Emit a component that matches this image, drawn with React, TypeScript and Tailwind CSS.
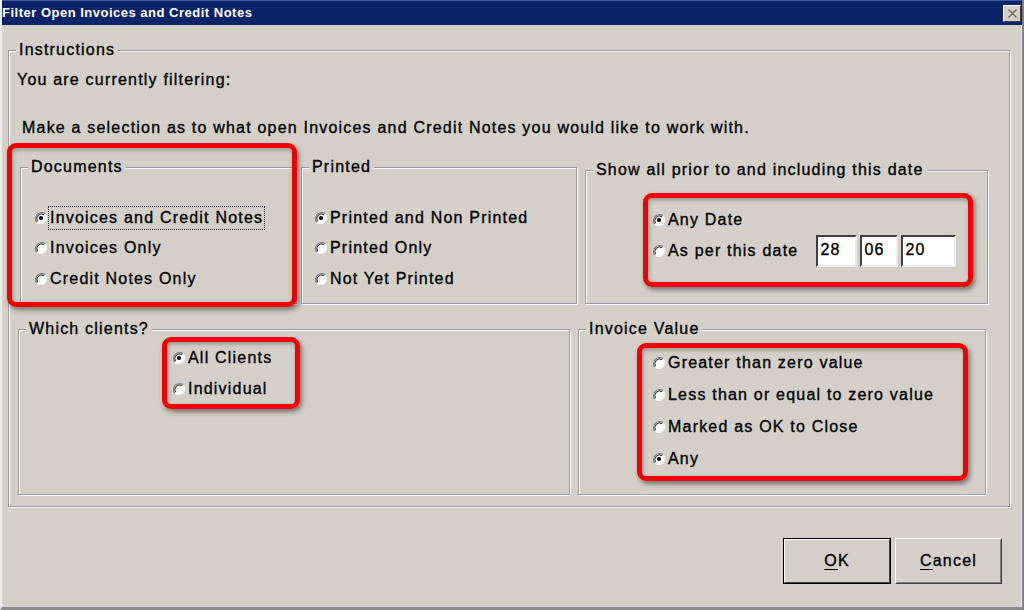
import React from "react";

const font = "font-['Liberation_Sans',Arial,sans-serif]";

const Radio = ({ checked }: { checked?: boolean }) => (
  <svg width="14" height="14" viewBox="0 0 14 14" className="shrink-0">
    <circle cx="7" cy="7" r="6" fill="#fff" />
    <path d="M11.2 2.8 A6 6 0 0 0 2.8 11.2" stroke="#808080" strokeWidth="1.4" fill="none" />
    <path d="M10.2 3.8 A4.6 4.6 0 0 0 3.8 10.2" stroke="#404040" strokeWidth="1.1" fill="none" />
    <path d="M2.8 11.2 A6 6 0 0 0 11.2 2.8" stroke="#f2f2f2" strokeWidth="1.4" fill="none" />
    {checked && <circle cx="7" cy="7" r="2.1" fill="#000" />}
  </svg>
);

const Option = ({
  label,
  checked,
  focused,
  h = "h-[31px]",
}: {
  label: string;
  checked?: boolean;
  focused?: boolean;
  h?: string;
}) => (
  <div className={`flex items-center ${h}`}>
    <Radio checked={checked} />
    <span
      className={`border px-[1px] py-[1px] leading-[20px] ${
        focused ? "border-dotted border-[#333]" : "border-transparent"
      }`}
    >
      {label}
    </span>
  </div>
);

const Group = ({
  title,
  className,
  children,
}: {
  title: string;
  className?: string;
  children?: React.ReactNode;
}) => (
  <div
    className={`relative shrink-0 border border-[#9a9a9a] shadow-[inset_1px_1px_0_#fff,1px_1px_0_#fff] ${className ?? ""}`}
  >
    <span className="absolute -top-[11px] left-[7px] bg-[#d4d0c8] px-[3px] leading-[20px] whitespace-nowrap">
      {title}
    </span>
    {children}
  </div>
);

const DateBox = ({ value, w }: { value: string; w: string }) => (
  <div
    className={`${w} h-[32px] bg-white border-2 border-t-[#404040] border-l-[#404040] border-r-[#ececec] border-b-[#ececec] pl-[2px] leading-[26px]`}
  >
    {value}
  </div>
);

const Mark = ({ className }: { className: string }) => (
  <div
    className={`absolute border-[5px] border-[#f20000] rounded-[9px] shadow-[2px_3px_5px_rgba(0,0,0,0.45),inset_1px_2px_4px_rgba(0,0,0,0.3)] ${className}`}
  />
);

export default function App() {
  return (
    <div
      className={`relative w-[1024px] h-[610px] overflow-hidden bg-[#d4d0c8] text-black text-[16px] tracking-[1.2px] [-webkit-text-stroke:0.35px_#000] ${font} flex flex-col border-l-2 border-l-[#ececec] border-r-2 border-r-[#808080] border-b-[3px] border-b-[#8a8a8a]`}
    >
      {/* title bar */}
      <div className="h-[25px] shrink-0 bg-[#0a246a] border-t border-[#3a5a9a] flex items-center justify-between pl-[0px] pr-[1px]">
        <span className="text-white font-bold text-[13px] tracking-[0.5px] [-webkit-text-stroke:0px]">
          Filter Open Invoices and Credit Notes
        </span>
        <div className="w-[18px] h-[17px] mt-[1px] bg-[#d4d0c8] border border-t-white border-l-white border-r-[#404040] border-b-[#404040] flex items-center justify-center">
          <svg width="11" height="11" viewBox="0 0 11 11">
            <path d="M1.5 1.5 L9.5 9.5 M9.5 1.5 L1.5 9.5" stroke="#6e6e6e" strokeWidth="1.6" />
          </svg>
        </div>
      </div>

      <div className="flex-1 flex flex-col pl-[6px] pt-[25px] border-r border-r-[#ececec]">
        {/* Instructions */}
        <Group title="Instructions" className="w-[1002px] h-[457px]">
          <div className="pl-[8px] pt-[19px] flex flex-col">
            <div className="leading-[20px]">You are currently filtering:</div>
            <div className="leading-[20px] mt-[28px] ml-[5px]">
              Make a selection as to what open Invoices and Credit Notes you would like to work with.
            </div>

            <div className="flex items-start mt-[29px] ml-[3px]">
              <Group title="Documents" className="w-[277px] h-[137px]">
                <div className="pt-[34px] pl-[13px]">
                  <Option label="Invoices and Credit Notes" checked focused />
                  <Option label="Invoices Only" h="h-[30px]" />
                  <Option label="Credit Notes Only" />
                </div>
              </Group>
              <Group title="Printed" className="w-[276px] h-[137px] ml-[4px]">
                <div className="pt-[34px] pl-[12px]">
                  <Option label="Printed and Non Printed" checked />
                  <Option label="Printed Only" h="h-[30px]" />
                  <Option label="Not Yet Printed" />
                </div>
              </Group>
              <Group
                title="Show all prior to and including this date"
                className="w-[403px] h-[134px] ml-[8px] mt-[3px]"
              >
                <div className="pt-[33px] pl-[66px]">
                  <Option label="Any Date" checked />
                  <div className="flex items-center">
                    <Option label="As per this date" h="h-[32px]" />
                    <div className="flex gap-[3px] ml-[16px]">
                      <DateBox value="28" w="w-[41px]" />
                      <DateBox value="06" w="w-[38px]" />
                      <DateBox value="20" w="w-[55px]" />
                    </div>
                  </div>
                </div>
              </Group>
            </div>

            <div className="flex items-start mt-[25px] ml-[1px]">
              <Group title="Which clients?" className="w-[552px] h-[166px]">
                <div className="pt-[12px] pl-[153px]">
                  <Option label="All Clients" checked />
                  <Option label="Individual" />
                </div>
              </Group>
              <Group title="Invoice Value" className="w-[408px] h-[166px] ml-[8px]">
                <div className="pt-[17px] pl-[73px]">
                  <Option label="Greater than zero value" h="h-[32px]" />
                  <Option label="Less than or equal to zero value" h="h-[32px]" />
                  <Option label="Marked as OK to Close" h="h-[32px]" />
                  <Option label="Any" checked h="h-[32px]" />
                </div>
              </Group>
            </div>
          </div>
        </Group>

        {/* buttons */}
        <div className="flex justify-end gap-[4px] mt-[31px] pr-[19px]">
          <button className="w-[108px] h-[46px] border border-black bg-[#d4d0c8] p-0">
            <div className="w-full h-full border border-t-white border-l-white border-r-[#404040] border-b-[#404040] flex items-center justify-center">
              <span>
                <span className="underline underline-offset-[3px]">O</span>K
              </span>
            </div>
          </button>
          <button className="w-[107px] h-[46px] bg-[#d4d0c8] border border-t-white border-l-white border-r-[#404040] border-b-[#404040] p-0">
            <div className="w-full h-full border border-transparent border-r-[#808080] border-b-[#808080] flex items-center justify-center">
              <span>
                <span className="underline underline-offset-[3px]">C</span>ancel
              </span>
            </div>
          </button>
        </div>
      </div>

      {/* highlight annotations */}
      <Mark className="left-[5px] top-[143px] w-[290px] h-[164px]" />
      <Mark className="left-[641px] top-[193px] w-[330px] h-[94px]" />
      <Mark className="left-[160px] top-[337px] w-[138px] h-[72px]" />
      <Mark className="left-[635px] top-[343px] w-[331px] h-[138px]" />
    </div>
  );
}
